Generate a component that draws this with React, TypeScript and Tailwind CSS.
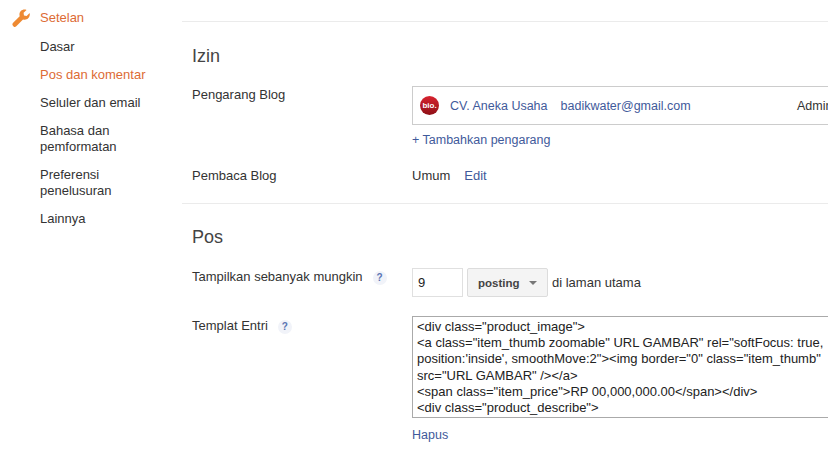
import React from "react";

function Help() {
  return (
    <span className="ml-[10px] inline-flex h-[14px] w-[14px] items-center justify-center rounded-full bg-[#f1f3f9] text-[10px] font-bold leading-none text-[#5a75b3]">?</span>
  );
}

function Row({ label, help, className, children }: { label: string; help?: boolean; className: string; children: React.ReactNode }) {
  return (
    <div className={`flex ${className}`}>
      <div className="w-[230px] shrink-0 pl-[10px] text-[#333]">
        {label}
        {help && <Help />}
      </div>
      <div className="min-w-0 flex-1">{children}</div>
    </div>
  );
}

const nav = [
  { t: "Dasar", h: 28 },
  { t: "Pos dan komentar", h: 28, active: true },
  { t: "Seluler dan email", h: 28 },
  { t: "Bahasa dan pemformatan", h: 44 },
  { t: "Preferensi penelusuran", h: 44 },
  { t: "Lainnya", h: 28 },
];

export default function App() {
  return (
    <div className="flex h-[451px] w-[828px] overflow-hidden bg-white font-['Liberation_Sans',Arial,sans-serif] text-[13px] leading-[16px] text-[#333]">
      <aside className="w-[182px] shrink-0 pt-[10px]">
        <div className="flex h-[16px] items-center text-[#dd6b35]">
          <svg viewBox="0 0 20 20" className="ml-[12px] h-[19px] w-[19px] fill-[#ee8a33]">
            <path d="M18.6 4.2 15.4 7.3 12.6 6.8 12.2 4 15.3 1C13.2.2 10.8.6 9.3 2.2 7.9 3.6 7.5 5.7 8.1 7.5L1.2 14.6C.2 15.6.2 16.8 1 17.6L1.7 18.3C2.5 19.1 3.6 19 4.5 18.1L11.6 11C13.5 11.7 15.6 11.3 17 9.8 18.5 8.3 19.1 6.2 18.6 4.2Z" />
          </svg>
          <span className="ml-[9px]">Setelan</span>
        </div>
        <ul className="mt-[7px] pl-[40px] pr-[20px]">
          {nav.map((n) => (
            <li key={n.t} style={{ height: n.h }} className={`pt-[6px] ${n.active ? "text-[#dd6b35]" : "text-[#333]"}`}>
              {n.t}
            </li>
          ))}
        </ul>
      </aside>

      <main className="min-w-0 flex-1">
        <div className="box-content h-[21px] border-b border-[#ebebeb]" />
        <section className="h-[181px]">
          <h2 className="pl-[10px] pt-[22px] text-[18px] leading-[24px] text-[#444]">Izin</h2>
          <Row label="Pengarang Blog" className="mt-[19px]">
            <div className="-mt-[1px] -mr-[10px] flex h-[39px] items-center border border-[#ccc] pl-[7px] text-[12.5px] text-[#3f5a9b]">
              <span className="flex h-[19px] w-[19px] shrink-0 items-center justify-center rounded-full bg-[linear-gradient(#d8232f,#8e0f16)] text-[8px] font-bold leading-none text-white">bio.</span>
              <span className="ml-[11px]">CV. Aneka Usaha</span>
              <span className="ml-[13px]">badikwater@gmail.com</span>
              <span className="ml-auto w-[40px] shrink-0 whitespace-nowrap text-[#333]">Admin</span>
            </div>
            <div className="mt-[7px] text-[12.5px] text-[#3f5a9b]">+ Tambahkan pengarang</div>
          </Row>
          <Row label="Pembaca Blog" className="mt-[20px]">
            <span className="text-[#333]">Umum</span>
            <span className="ml-[14px] text-[#3f5a9b]">Edit</span>
          </Row>
        </section>
        <div className="border-t border-[#ebebeb]">
          <h2 className="pl-[10px] pt-[21px] text-[18px] leading-[24px] text-[#444]">Pos</h2>
          <Row label="Tampilkan sebanyak mungkin" help className="mt-[20px]">
            <div className="-mt-[1px] flex items-center">
              <div className="flex h-[29px] w-[51px] items-center border border-[#e0e0e0] pl-[5px] text-[#222]">9</div>
              <div className="ml-[4px] flex h-[29px] w-[81px] items-center rounded-[2px] border border-[#dcdcdc] bg-[#f4f4f4] pl-[10px] text-[11.5px] font-bold text-[#444]">
                posting
                <span className="ml-[9px] h-0 w-0 border-x-[4px] border-t-[4px] border-x-transparent border-t-[#777]" />
              </div>
              <span className="ml-[4px] text-[#333]">di laman utama</span>
            </div>
          </Row>
          <Row label="Templat Entri" help className="mt-[21px]">
            <div className="-mt-[2px] -mr-[10px] h-[102px] overflow-hidden border border-[#aaa] pl-[4px] pt-[2px] text-[13px] leading-[16.2px] text-[#222]">
              <div className="w-[430px]">
                &lt;div class="product_image"&gt;<br />
                &lt;a class="item_thumb zoomable" URL GAMBAR" rel="softFocus: true,<br />
                position:'inside', smoothMove:2"&gt;&lt;img border="0" class="item_thumb"<br />
                src="URL GAMBAR" /&gt;&lt;/a&gt;<br />
                &lt;span class="item_price"&gt;RP 00,000,000.00&lt;/span&gt;&lt;/div&gt;<br />
                &lt;div class="product_describe"&gt;<br />
                &lt;div&gt;
              </div>
            </div>
            <div className="mt-[9px] text-[12.5px] text-[#3f5a9b]">Hapus</div>
          </Row>
        </div>
      </main>
    </div>
  );
}
